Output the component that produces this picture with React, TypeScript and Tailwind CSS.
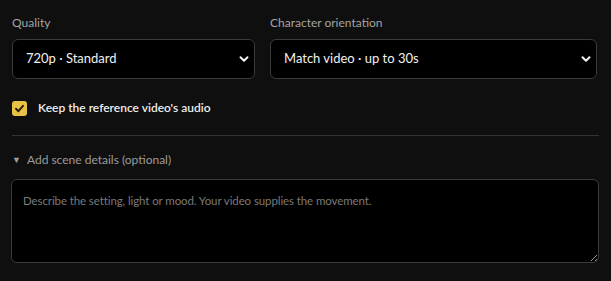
import React from "react";

function Chevron() {
  return (
    <svg width="10" height="10" viewBox="0 0 10 10" className="shrink-0">
      <path d="M1.5 3.2 L5 6.7 L8.5 3.2" fill="none" stroke="#f2f2f2" strokeWidth="2" strokeLinecap="round" strokeLinejoin="round" />
    </svg>
  );
}

function SelectBox({ value }: { value: string }) {
  return (
    <div className="flex h-[40px] items-center justify-between rounded-[6px] border border-[#3a3a3a] bg-black pl-[13px] pr-[5px]">
      <span className="text-[13px] text-[#f0f0f0]">{value}</span>
      <Chevron />
    </div>
  );
}

export default function App() {
  return (
    <div className="h-[281px] w-[611px] bg-[#0f0f0f] px-[12px] pt-[15px] font-['Lato',sans-serif]">
      <div className="flex gap-[15px]">
        <div className="flex w-[243px] flex-col">
          <label className="mb-[8px] text-[12px] leading-[16px] text-[#a3a3a3]">Quality</label>
          <SelectBox value="720p · Standard" />
        </div>
        <div className="flex flex-1 flex-col pr-[2px]">
          <label className="mb-[8px] text-[12px] leading-[16px] text-[#a3a3a3]">Character orientation</label>
          <SelectBox value="Match video · up to 30s" />
        </div>
      </div>
      <div className="mt-[20px] flex items-center gap-[11px]">
        <div className="flex h-[15px] w-[15px] items-center justify-center rounded-[3px] bg-[#e7c247]">
          <svg width="11" height="11" viewBox="0 0 11 11">
            <path d="M2 5.8 L4.4 8.2 L9 2.8" fill="none" stroke="#2a2205" strokeWidth="2" strokeLinecap="round" strokeLinejoin="round" />
          </svg>
        </div>
        <span className="text-[12px] font-semibold text-[#ededed]">Keep the reference video's audio</span>
      </div>
      <div className="mt-[18px] h-px bg-[#333333]" />
      <div className="mt-[16px] flex items-center gap-[6px] text-[12px] leading-[16px] text-[#9c9c9c]">
        <span className="text-[9px]">▼</span>
        <span>Add scene details (optional)</span>
      </div>
      <textarea
        className="mt-[11px] block h-[84px] w-[588px] -ml-px resize-y rounded-[6px] border border-[#3a3a3a] bg-black px-[11px] py-[12px] text-[11.5px] tracking-[-0.1px] text-[#eee] placeholder:text-[#7a7a7a] outline-none"
        placeholder="Describe the setting, light or mood. Your video supplies the movement."
      />
    </div>
  );
}
